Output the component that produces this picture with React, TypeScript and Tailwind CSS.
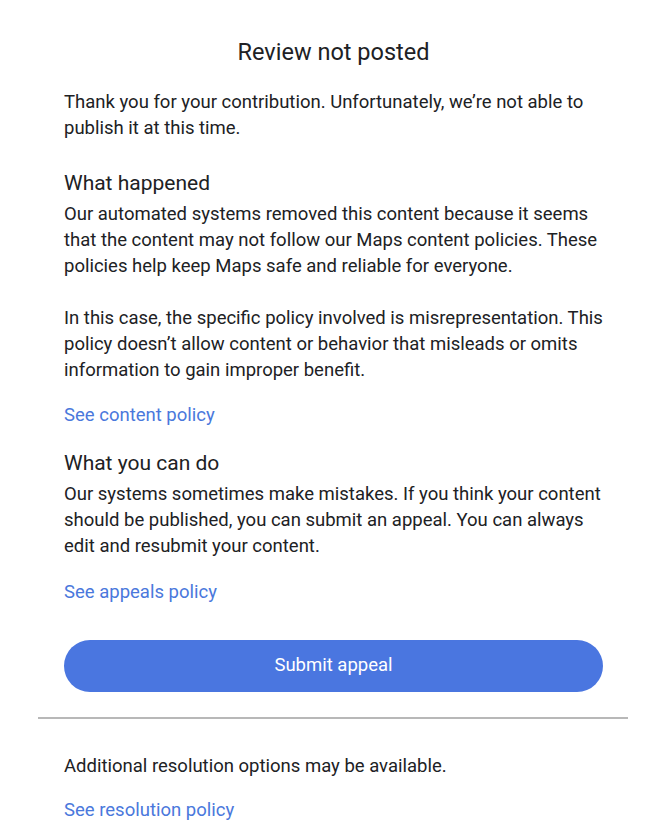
export default function App() {
  return (
    <div
      className="min-h-[837px] w-[655px] bg-white text-[#202124]"
      style={{ fontFamily: "Roboto, 'Noto Sans', sans-serif" }}
    >
      <div className="pl-[64px] pr-[52px] pt-[37px]">
        <h1 className="text-center text-[23.5px] leading-[30px] font-normal">Review not posted</h1>
        <p className="mt-[22px] text-[18.5px] leading-[26px]">
          Thank you for your contribution. Unfortunately, we’re not able to publish it at this time.
        </p>
        <h2 className="mt-[28px] text-[21px] leading-[28px] font-normal">What happened</h2>
        <p className="mt-[4px] text-[18.5px] leading-[26px]">
          Our automated systems removed this content because it seems that the content may not follow our Maps content policies. These policies help keep Maps safe and reliable for everyone.
        </p>
        <p className="mt-[26px] text-[18.5px] leading-[26px]">
          In this case, the specific policy involved is misrepresentation. This policy doesn’t allow content or behavior that misleads or omits information to gain improper benefit.
        </p>
        <p className="mt-[19px] text-[18.5px] leading-[26px] text-[#4a78dc]">See content policy</p>
        <h2 className="mt-[21px] text-[21px] leading-[28px] font-normal">What you can do</h2>
        <p className="mt-[4px] text-[18.5px] leading-[26px]">
          Our systems sometimes make mistakes. If you think your content should be published, you can submit an appeal. You can always edit and resubmit your content.
        </p>
        <p className="mt-[20px] text-[18.5px] leading-[26px] text-[#4a78dc]">See appeals policy</p>
        <button className="mt-[35px] flex h-[52px] w-full items-center justify-center rounded-full bg-[#4a76e0] text-[18.5px] text-white">
          Submit appeal
        </button>
      </div>
      <div className="ml-[38px] mr-[27px] mt-[25px] h-[2px] bg-[#b8b8b8]" />
      <div className="pl-[64px] pr-[52px] pt-[34px]">
        <p className="text-[18.5px] leading-[26px]">Additional resolution options may be available.</p>
        <p className="mt-[18px] text-[18.5px] leading-[26px] text-[#4a78dc]">See resolution policy</p>
      </div>
    </div>
  );
}
